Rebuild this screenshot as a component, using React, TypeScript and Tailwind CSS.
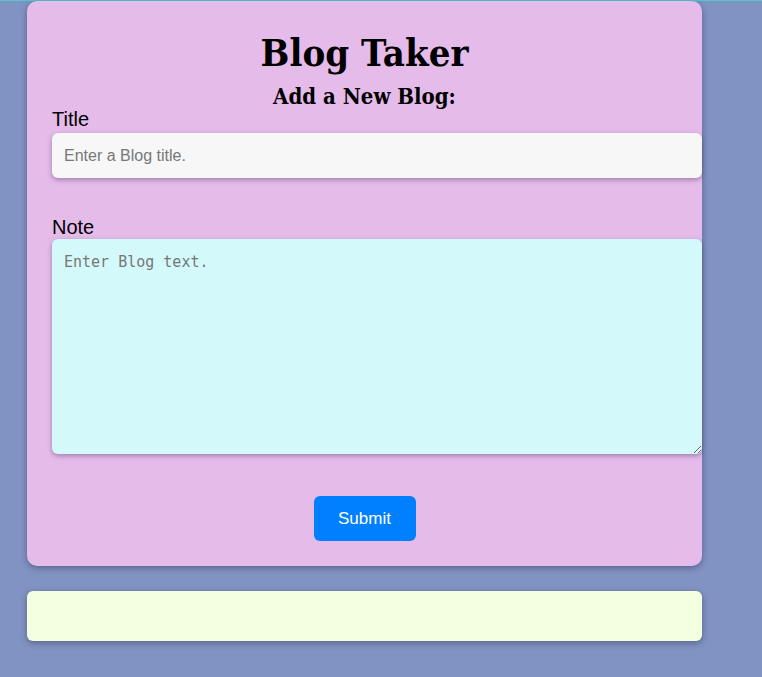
import React, { useState } from "react";

const App: React.FC = () => {
  const [title, setTitle] = useState("");
  const [note, setNote] = useState("");

  return (
    <div className="min-h-[677px] bg-[#8193c2] border-t border-[#4fc8cb]">
      <div className="pl-[27px] w-[702px] flex flex-col gap-[25px]">
        <form
          className="bg-[#e5bbea] rounded-[10px] shadow-[0_2px_6px_rgba(40,40,80,0.45)] pl-[25px] pt-[30px] pb-[25px] flex flex-col"
          onSubmit={(e) => e.preventDefault()}
        >
          <h1 className="text-center font-['DejaVu_Serif_Condensed','DejaVu_Serif',serif] font-bold text-[38px] leading-[44px] text-black pr-[25px]">
            Blog Taker
          </h1>
          <h2 className="mt-[6px] text-center font-['DejaVu_Serif_Condensed','DejaVu_Serif',serif] font-bold text-[22px] leading-[30px] text-black pr-[25px]">
            Add a New Blog:
          </h2>
          <label className="font-['Liberation_Sans',Arial,sans-serif] text-[20px] leading-[20px] text-black mt-[-2px]">
            Title
          </label>
          <input
            value={title}
            onChange={(e) => setTitle(e.target.value)}
            placeholder="Enter a Blog title."
            className="mt-[4px] w-[650px] h-[45px] bg-[#f7f7f7] rounded-[6px] px-[12px] font-['Liberation_Sans',Arial,sans-serif] text-[16px] text-black placeholder:text-[#777] shadow-[0_2px_5px_rgba(60,40,80,0.4)] outline-none"
          />
          <label className="font-['Liberation_Sans',Arial,sans-serif] text-[20px] leading-[20px] text-black mt-[39px]">
            Note
          </label>
          <textarea
            value={note}
            onChange={(e) => setNote(e.target.value)}
            placeholder="Enter Blog text."
            className="mt-[2px] w-[650px] h-[215px] bg-[#d4f9fa] rounded-[6px] px-[12px] py-[12px] font-['DejaVu_Sans_Mono',monospace] text-[15px] text-black placeholder:text-[#777] shadow-[0_2px_5px_rgba(60,40,80,0.4)] outline-none"
          />
          <div className="flex justify-center pr-[25px] mt-[42px]">
            <button
              type="submit"
              className="w-[102px] h-[45px] bg-[#007fff] rounded-[6px] text-white font-['Liberation_Sans',Arial,sans-serif] text-[17px]"
            >
              Submit
            </button>
          </div>
        </form>
        <div className="h-[50px] bg-[#f4ffdf] rounded-[6px] shadow-[0_2px_6px_rgba(40,40,80,0.45)]"></div>
      </div>
    </div>
  );
};

export default App;
